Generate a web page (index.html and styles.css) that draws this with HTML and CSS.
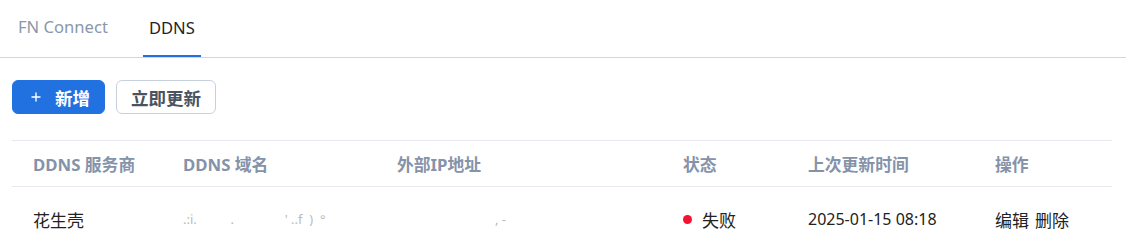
FILE: index.html
```html
<!DOCTYPE html>
<html lang="zh">
<head>
<meta charset="utf-8">
<link rel="stylesheet" href="styles.css">
</head>
<body>
<div class="tabs">
  <div class="tab">FN Connect</div>
  <div class="tab active">DDNS</div>
</div>
<div class="toolbar">
  <button class="btn primary"><svg class="plus" width="10" height="10" viewBox="0 0 10 10"><path d="M5 0.5V9.5M0.5 5H9.5" stroke="#fff" stroke-width="1.4" fill="none"/></svg>新增</button>
  <button class="btn">立即更新</button>
</div>
<div class="table">
  <div class="row head">
    <div class="c c1">DDNS 服务商</div>
    <div class="c c2">DDNS 域名</div>
    <div class="c c3">外部IP地址</div>
    <div class="c c4">状态</div>
    <div class="c c5">上次更新时间</div>
    <div class="c c6">操作</div>
  </div>
  <div class="row body">
    <div class="c c1">花生壳</div>
    <div class="c c2 blur">.:i.&nbsp;&nbsp;&nbsp;&nbsp;&nbsp;&nbsp;&nbsp;&nbsp;&nbsp;&nbsp;.&nbsp;&nbsp;&nbsp;&nbsp;&nbsp;&nbsp;&nbsp;&nbsp;&nbsp;&nbsp;&nbsp;&nbsp;&nbsp;&nbsp;&nbsp;'&nbsp;..f&nbsp;&nbsp;)&nbsp;&nbsp;°</div>
    <div class="c c3 blur"><span class="tail">, -</span></div>
    <div class="c c4"><span class="dot"></span>失败</div>
    <div class="c c5 date">2025-01-15 08:18</div>
    <div class="c c6"><span class="act">编辑</span><span class="act">删除</span></div>
  </div>
</div>
</body>
</html>
```

FILE: styles.css
```css
body {
  margin: 0;
  font-family: "Noto Sans", "Noto Sans CJK SC", sans-serif;
  background: #fff;
  color: #222;
}
.tabs {
  display: flex;
  height: 57px;
  border-bottom: 1px solid #cdd7e2;
  padding-left: 13px;
}
.tab {
  padding: 0 5px;
  margin-right: 30px;
  height: 57px;
  box-sizing: border-box;
  display: flex;
  align-items: center;
  padding-bottom: 2px;
  font-size: 16.6px;
  color: #8a97aa;
  border-bottom: 2px solid transparent;
}
.tab.active {
  color: #1f2329;
  border-bottom-color: #2470e0;
  padding: 0 6px;
}
.toolbar {
  display: flex;
  gap: 11px;
  padding: 22px 12px 0;
}
.btn {
  height: 34px;
  box-sizing: border-box;
  border: 1px solid #c7d1dd;
  background: #fff;
  border-radius: 6px;
  font-family: "Noto Sans CJK SC", sans-serif;
  font-size: 17.5px;
  font-weight: 700;
  color: #4b5260;
  padding: 0 14px;
  display: flex;
  align-items: center;
}
.btn.primary {
  background: #2271e0;
  border-color: #2271e0;
  color: #fff;
  padding: 0 14px 0 18px;
}
.plus {
  margin-right: 14px;
}
.table {
  margin: 26px 14px 0 12px;
  border-top: 1px solid #e6e9ef;
}
.row {
  display: grid;
  grid-template-columns: 150px 214px 286px 125px 187px 138px;
  align-items: center;
}
.row.head {
  height: 45px;
  border-bottom: 1px solid #e6e9ef;
  color: #8593a9;
  font-weight: 700;
  font-size: 16.8px;
}
.row.body {
  height: 64px;
  font-size: 17px;
  color: #222;
}
.c {
  padding-left: 21px;
  white-space: nowrap;
  font-family: "Noto Sans", "Noto Sans CJK SC", sans-serif;
}
.date {
  font-size: 16px;
}
.blur {
  color: #bbb;
  font-size: 13px;
}
.tail {
  margin-left: 98px;
}
.dot {
  display: inline-block;
  width: 9px;
  height: 9px;
  border-radius: 50%;
  background: #f5112f;
  margin-right: 10px;
  vertical-align: middle;
  position: relative;
  top: -2px;
}
.act {
  margin-right: 6px;
}
```
